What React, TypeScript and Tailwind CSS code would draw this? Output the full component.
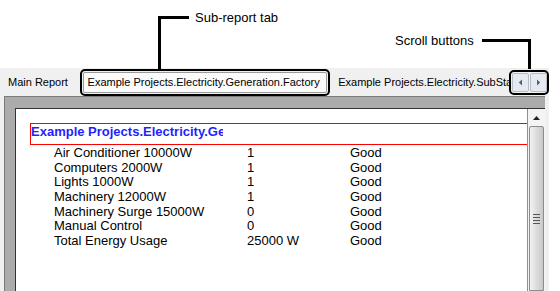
import React from "react";

const rows = [
  ["Air Conditioner 10000W", "1", "Good"],
  ["Computers 2000W", "1", "Good"],
  ["Lights 1000W", "1", "Good"],
  ["Machinery 12000W", "1", "Good"],
  ["Machinery Surge 15000W", "0", "Good"],
  ["Manual Control", "0", "Good"],
  ["Total Energy Usage", "25000 W", "Good"],
];

function Callout({ label, className }: { label: string; className: string }) {
  return (
    <div className={`absolute flex items-center ${className}`}>
      <span className="text-[13px] leading-none text-black">{label}</span>
    </div>
  );
}

function ScrollArrow({ dir }: { dir: "left" | "right" }) {
  return (
    <div className="w-[17px] h-[19px] flex items-center justify-center bg-[#e6e9ef] border border-[#b7bcc5] rounded-[2px]">
      <svg width="5" height="7" viewBox="0 0 5 7">
        {dir === "left" ? (
          <path d="M4 0.5 L0.8 3.5 L4 6.5 Z" fill="#4d6185" />
        ) : (
          <path d="M1 0.5 L4.2 3.5 L1 6.5 Z" fill="#4d6185" />
        )}
      </svg>
    </div>
  );
}

function VScrollbar() {
  return (
    <div className="w-[18px] flex flex-col bg-[#f4f4f4] border-l border-[#8f8f8f]">
      <div className="h-[17px] flex items-center justify-center">
        <svg width="7" height="4" viewBox="0 0 7 4">
          <path d="M3.5 0 L7 4 L0 4 Z" fill="#222" />
        </svg>
      </div>
      <div className="flex-1 mx-[1px] rounded-t-[2px] border border-[#8c8c8c] bg-gradient-to-r from-[#f3f3f3] via-[#dcdcdc] to-[#c9c9c9] flex flex-col items-center pt-[87px]">
        <div className="flex flex-col gap-[2px]">
          <div className="w-[7px] h-[1px] bg-[#555]" />
          <div className="w-[7px] h-[1px] bg-[#555]" />
          <div className="w-[7px] h-[1px] bg-[#555]" />
          <div className="w-[7px] h-[1px] bg-[#555]" />
        </div>
      </div>
    </div>
  );
}

export default function App() {
  return (
    <div
      className="relative w-[560px] h-[291px] bg-white overflow-hidden flex flex-col"
      style={{ fontFamily: '"Liberation Sans", Arial, sans-serif' }}
    >
      {/* annotation area */}
      <div className="h-[68px] shrink-0" />

      {/* callouts */}
      <Callout label="Sub-report tab" className="left-[195px] top-[11px]" />
      <div className="absolute left-[158px] top-[16px] w-[31px] h-[3px] bg-black" />
      <div className="absolute left-[158px] top-[16px] w-[3px] h-[53px] bg-black" />

      <Callout label="Scroll buttons" className="left-[395px] top-[34px]" />
      <div className="absolute left-[482px] top-[39px] w-[49px] h-[3px] bg-black" />
      <div className="absolute left-[528px] top-[39px] w-[3px] h-[30px] bg-black" />

      {/* window */}
      <div className="w-[549px] flex-1 bg-[#f0f0f0] flex flex-col">
        {/* tab strip */}
        <div className="h-[28px] flex items-center text-[11px] text-black whitespace-nowrap relative">
          <div className="pl-[8px] w-[80px] leading-none pt-[1px]">Main Report</div>
          <div className="h-[27px] w-[252px] border-[2.5px] border-black rounded-[5px] flex items-center p-[1px]">
            <div className="h-full flex-1 bg-[#fbfbfb] border border-[#9a9a9a] rounded-[2px] flex items-center pl-[4px] leading-none">
              Example Projects.Electricity.Generation.Factory
            </div>
          </div>
          <div className="pl-[8px] w-[180px] overflow-hidden leading-none">
            Example Projects.Electricity.SubStation.Generator
          </div>
          <div className="h-[25px] w-[40px] border-[2.5px] border-black rounded-[5px] flex items-center justify-center gap-[1px]">
            <ScrollArrow dir="left" />
            <ScrollArrow dir="right" />
          </div>
        </div>

        {/* report panel */}
        <div className="flex-1 flex ml-[4px] mr-[4px] border-t border-l border-[#7a7a7a] bg-[#ababab] pt-[11px] pl-[10px] min-h-0">
          <div className="flex-1 flex bg-white border-t border-l border-[#333] min-h-0">
            <div className="flex-1 pt-[14px] pl-[14px] overflow-hidden">
              <div className="h-[22px] border border-[#ff0000] border-r-0">
                <div className="w-[192px] overflow-hidden whitespace-nowrap font-bold text-[13px] leading-[15px] text-[#1f1fff]">
                  Example Projects.Electricity.Generation.Factory
                </div>
              </div>
              <div className="text-[13px] text-black">
                {rows.map(([name, val, status]) => (
                  <div key={name} className="flex h-[14.7px] items-center leading-none">
                    <span className="w-[217px] pl-[24px]">{name}</span>
                    <span className="w-[103px]">{val}</span>
                    <span>{status}</span>
                  </div>
                ))}
              </div>
            </div>
            <VScrollbar />
          </div>
        </div>
      </div>
    </div>
  );
}
